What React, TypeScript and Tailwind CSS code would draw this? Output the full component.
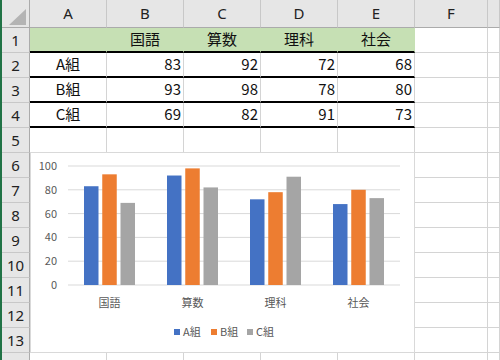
import React from "react"

const colLetters = ["A", "B", "C", "D", "E", "F", ""]
const subjects = ["国語", "算数", "理科", "社会"]
const groups = [
  { name: "A組", color: "#4472c4", values: [83, 92, 72, 68] },
  { name: "B組", color: "#ed7d31", values: [93, 98, 78, 80] },
  { name: "C組", color: "#a5a5a5", values: [69, 82, 91, 73] },
]

const rows: string[][] = [
  ["", "国語", "算数", "理科", "社会", "", ""],
  ...groups.map((g) => [g.name, ...g.values.map(String), "", ""]),
]

function Cell({ r, c, text }: { r: number; c: number; text: string }) {
  const inTable = c < 5 && r < 4
  let cls = "border-r border-b border-[#d4d4d4] bg-white"
  if (inTable && r === 0) cls = "border-r border-b-2 border-r-[#c6e0b4] border-b-black bg-[#c6e0b4]"
  else if (inTable) cls = "border-r border-b-2 border-r-[#d4d4d4] border-b-black bg-white"
  const align = r === 0 || c === 0 ? "justify-center" : "justify-end pr-[2px]"
  return (
    <div className={`flex items-center ${align} ${cls} text-[15px] text-[#111] font-['Noto_Sans_CJK_JP',sans-serif]`}>
      {text}
    </div>
  )
}

function Chart() {
  const plotLeft = 68
  const plotRight = 400
  const zeroY = 285
  const scale = 1.19
  const catW = (plotRight - plotLeft) / 4
  const barW = 14.5
  const gap = 3.75
  const ticks = [0, 20, 40, 60, 80, 100]
  return (
    <div className="absolute left-[30px] top-[152px] w-[385px] h-[201px] border border-[#d9d9d9] bg-white">
      <svg width="383" height="199" viewBox="31 153 383 199" className="block font-['Noto_Sans_CJK_JP',sans-serif]">
        {ticks.map((t) => (
          <g key={t}>
            <line x1={plotLeft} x2={plotRight} y1={zeroY - t * scale} y2={zeroY - t * scale} stroke="#d9d9d9" strokeWidth="1" />
            <text x="57" y={zeroY - t * scale + 4} textAnchor="end" fontSize="11" fill="#595959">
              {t}
            </text>
          </g>
        ))}
        {subjects.map((s, i) => {
          const cx = plotLeft + catW * (i + 0.5)
          const start = cx - (barW * 3 + gap * 2) / 2
          return (
            <g key={s}>
              {groups.map((g, j) => (
                <rect
                  key={g.name}
                  x={start + j * (barW + gap)}
                  y={zeroY - g.values[i] * scale}
                  width={barW}
                  height={g.values[i] * scale}
                  fill={g.color}
                />
              ))}
              <text x={cx} y="307" textAnchor="middle" fontSize="11" fill="#595959">
                {s}
              </text>
            </g>
          )
        })}
        {groups.map((g, j) => {
          const x = [174, 211, 247][j]
          return (
            <g key={g.name}>
              <rect x={x} y="329" width="6" height="6" fill={g.color} />
              <text x={x + 9} y="336" fontSize="11" fill="#595959">
                {g.name}
              </text>
            </g>
          )
        })}
      </svg>
    </div>
  )
}

export default function App() {
  return (
    <div className="relative flex w-[500px] h-[360px] overflow-hidden bg-white">
      <div className="w-[2px] bg-[#217346] shrink-0" />
      <div className="grid grid-cols-[28px_77px_77px_77px_77px_77px_73px_1fr] grid-rows-[28px_repeat(14,25px)] flex-1">
        <div className="relative bg-[#e6e6e6] border-r border-b border-[#ababab]">
          <svg width="17" height="16" className="absolute left-[7px] top-[9px]">
            <polygon points="17,0 17,16 0,16" fill="#b4b4b4" />
          </svg>
        </div>
        {colLetters.map((l, i) => (
          <div
            key={i}
            className="flex items-center justify-center bg-[#e6e6e6] border-r border-r-[#c8c8c8] border-b border-b-[#ababab] text-[15px] text-[#222] font-['Noto_Sans',sans-serif]"
          >
            {l}
          </div>
        ))}
        {Array.from({ length: 14 }, (_, r) => (
          <React.Fragment key={r}>
            <div className="flex items-start justify-center pt-[1px] bg-[#e6e6e6] border-r border-r-[#ababab] border-b border-b-[#c8c8c8] text-[15px] text-[#222] font-['Noto_Sans',sans-serif]">
              {r + 1}
            </div>
            {colLetters.map((_, c) => (
              <Cell key={c} r={r} c={c} text={rows[r] ? rows[r][c] : ""} />
            ))}
          </React.Fragment>
        ))}
      </div>
      <Chart />
    </div>
  )
}
